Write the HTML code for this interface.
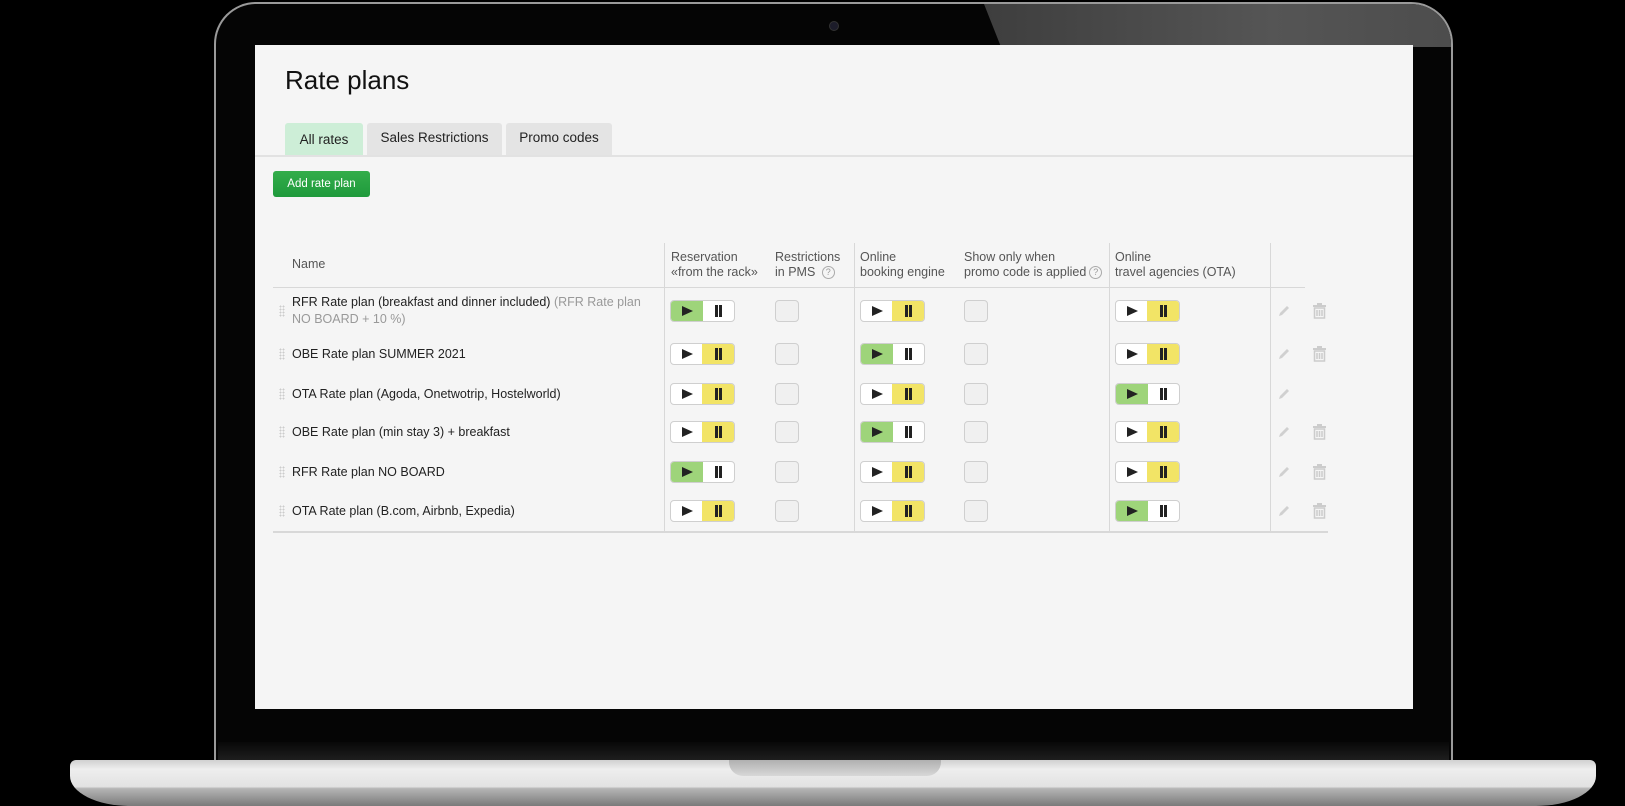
<!DOCTYPE html>
<html><head><meta charset="utf-8"><style>
*{margin:0;padding:0;box-sizing:border-box}
body{width:1625px;height:806px;background:#000;position:relative;overflow:hidden;font-family:"Liberation Sans",Arial,sans-serif}
.a{position:absolute}
.bezel{left:214px;top:2px;width:1239px;height:770px;border-radius:42px 42px 0 0;background:#050505;border:2px solid #9a9a9a;border-bottom:none;overflow:hidden}
.refl{left:768px;top:0;width:480px;height:43px;background:linear-gradient(90deg,#3e3e3e,#555 60%,#4c4c4c);clip-path:polygon(0 0,100% 0,100% 100%,17px 100%)}
.screen{left:255px;top:45px;width:1158px;height:664px;background:#f5f5f5}
.base{left:70px;top:760px;width:1526px;height:46px;background:linear-gradient(#d0d0d0,#eeeeee 20%,#e2e2e2 58%,#b5b5b5 62%,#7a7a7a 100%);border-radius:6px 6px 60px 60px/6px 6px 30px 30px}
.notch{left:729px;top:760px;width:212px;height:16px;background:linear-gradient(#b0b0b0,#d8d8d8);border-radius:0 0 14px 14px}
.tab{top:123px;height:32px;font-size:13.5px;color:#222;text-align:center;line-height:33px;border-radius:3px 3px 0 0;background:#e4e4e4}
.hd{font-size:12.5px;color:#555;line-height:15px;top:250px}
.q{display:inline-block;width:13px;height:13px;border:1px solid #aaa;border-radius:50%;font-size:9px;line-height:11px;text-align:center;color:#999;vertical-align:1px;margin-left:3px}
.vl{width:1px;background:#d8d8d8;top:243px;height:289px}
.nm{left:292px;font-size:12.5px;color:#222;line-height:17px}
.tg{width:65px;height:22px;border:1px solid #cfcfcf;border-radius:4px;background:#fff;overflow:hidden}
.tg span{position:absolute;top:0;width:32px;height:20px}
.tg .l{left:0}.tg .r{right:0}
.g{background:#9ed47a}.y{background:#f2e466}
.pl{position:absolute;left:11px;top:5px;width:0;height:0;border-left:11px solid #222;border-top:5.5px solid transparent;border-bottom:5.5px solid transparent}
.pa{position:absolute;left:13px;top:4px;width:7px;height:12px;border-left:3px solid #222;border-right:3px solid #222}
.cb{width:24px;height:22px;border:1px solid #cfcfcf;border-radius:4px;background:#f0f0f0}
.dr{left:279px;width:6px;height:12px;background-image:radial-gradient(#ccc 40%,transparent 45%);background-size:3px 3px}
</style></head><body>
<div class="a bezel"><div class="a refl"></div></div>
<div class="a" style="left:829px;top:21px;width:10px;height:10px;border-radius:50%;background:#1c1c2a;border:1px solid #333"></div>
<div class="a" style="left:218px;top:742px;width:1231px;height:18px;background:linear-gradient(#080808,#1e1e1e)"></div>
<div class="a base"></div>
<div class="a notch"></div>
<div class="a screen"></div>

<div class="a" style="left:285px;top:65px;font-size:26px;color:#111">Rate plans</div>
<div class="a tab" style="left:285px;width:78px;background:#cdeed7">All rates</div>
<div class="a tab" style="left:367px;width:135px;line-height:30px">Sales Restrictions</div>
<div class="a tab" style="left:506px;width:106px;line-height:30px">Promo codes</div>
<div class="a" style="left:255px;top:155px;width:1158px;height:2px;background:#e2e2e2"></div>
<div class="a" style="left:273px;top:171px;width:97px;height:26px;border-radius:3px;background:linear-gradient(#33ad4a,#1f9a3c);color:#fff;font-size:11.5px;line-height:26px;text-align:center">Add rate plan</div>

<div class="a hd" style="left:292px;top:257px">Name</div>
<div class="a hd" style="left:671px">Reservation<br>«from the rack»</div>
<div class="a hd" style="left:775px">Restrictions<br>in PMS <span class="q">?</span></div>
<div class="a hd" style="left:860px">Online<br>booking engine</div>
<div class="a hd" style="left:964px">Show only when<br>promo code is applied<span class="q">?</span></div>
<div class="a hd" style="left:1115px">Online<br>travel agencies (OTA)</div>
<div class="a vl" style="left:664px"></div>
<div class="a vl" style="left:854px"></div>
<div class="a vl" style="left:1109px"></div>
<div class="a vl" style="left:1270px"></div>
<div class="a" style="left:273px;top:287px;width:1032px;height:1px;background:#d8d8d8"></div>
<div class="a" style="left:273px;top:531px;width:1055px;height:2px;background:#d8d8d8"></div>

<div id="rows"></div>
<script>
var rows=[
[2,'RFR Rate plan (breakfast and dinner included) <span style="color:#999">(RFR Rate plan<br>NO BOARD + 10 %)</span>',311,'g','y','y',1],
[1,'OBE Rate plan SUMMER 2021',354,'y','g','y',1],
[1,'OTA Rate plan (Agoda, Onetwotrip, Hostelworld)',394,'y','y','g',0],
[1,'OBE Rate plan (min stay 3) + breakfast',432,'y','g','y',1],
[1,'RFR Rate plan NO BOARD',472,'g','y','y',1],
[1,'OTA Rate plan (B.com, Airbnb, Expedia)',511,'y','y','g',1]];
function tg(x,c,s){return '<div class="a tg" style="left:'+x+'px;top:'+(c-11)+'px">'+(s=='g'?'<span class="l g"></span>':'<span class="r y"></span>')+'<span class="l"><i class="pl"></i></span><span class="r"><i class="pa"></i></span></div>';}
var h='';
rows.forEach(function(r){var c=r[2];
h+='<div class="a nm" style="top:'+(c-8.5*r[0])+'px">'+r[1]+'</div>';
h+='<div class="a dr" style="top:'+(c-6)+'px"></div>';
h+=tg(670,c,r[3])+tg(860,c,r[4])+tg(1115,c,r[5]);
h+='<div class="a cb" style="left:775px;top:'+(c-11)+'px"></div><div class="a cb" style="left:964px;top:'+(c-11)+'px"></div>';
h+='<svg class="a" style="left:1277px;top:'+(c-7)+'px" width="14" height="14"><path d="M2 12 L3 9 L10 2 L12 4 L5 11 Z" fill="#d0d0d0"/></svg>';
if(r[6])h+='<svg class="a" style="left:1312px;top:'+(c-8)+'px" width="15" height="16"><rect x="1" y="2" width="13" height="2" fill="#ccc"/><rect x="5" y="0" width="5" height="2" fill="#ccc"/><path d="M2.5 5 H12.5 V15 H2.5 Z M5 7 V13 M7.5 7 V13 M10 7 V13" fill="none" stroke="#ccc" stroke-width="1.5"/></svg>';
});
document.getElementById('rows').innerHTML=h;
</script>
</body></html>
